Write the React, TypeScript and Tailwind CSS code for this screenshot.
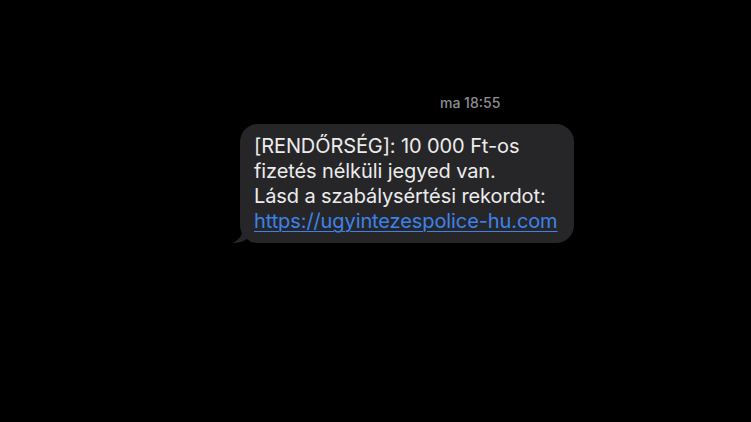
export default function App() {
  return (
    <div className="w-full h-[422px] bg-black overflow-hidden" style={{ fontFamily: "Inter, 'Noto Sans', sans-serif" }}>
      <div className="flex flex-col pt-[95px] pl-[240px]">
        <div className="pl-[200px] text-[14px] leading-[16px] text-[#8e8e93] font-medium">ma 18:55</div>
        <div className="relative mt-[13px] w-[334px] rounded-[18px] bg-[#262628] pl-[14px] pr-[8px] pt-[10px] pb-[9px] text-[20px] leading-[25px] text-[#ececec] tracking-[-0.1px]">
          [RENDŐRSÉG]: 10 000 Ft-os
          <br />
          fizetés nélküli jegyed van.
          <br />
          Lásd a szabálysértési rekordot:
          <br />
          <span className="text-[#3d82ec] underline underline-offset-[3px] decoration-[1px]">https://ugyintezespolice-hu.com</span>
          <svg className="absolute left-[-8px] bottom-0" width="20" height="20" viewBox="0 0 20 20">
            <path d="M20 0 L12 0 C12 10 8 17 0 20 C7 20 13 18 16 15 C17 16 18 18 20 20 Z" fill="#262628" />
          </svg>
        </div>
      </div>
    </div>
  );
}
